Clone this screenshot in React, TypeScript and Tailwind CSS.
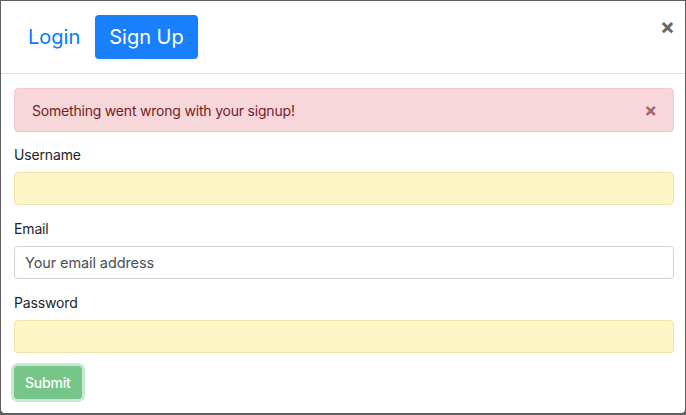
import React from 'react';

const font = { fontFamily: 'Inter, "Open Sans", sans-serif' };

function Field({ label, placeholder, warn }: { label: string; placeholder?: string; warn?: boolean }) {
  return (
    <div className="flex flex-col">
      <label className="text-[14px] tracking-[-0.15px] leading-[20px] text-[#212529] mb-[7px]">{label}</label>
      <input
        placeholder={placeholder}
        className={`h-[33px] w-full rounded-[4px] border px-[10px] text-[14.5px] tracking-[-0.1px] outline-none placeholder:text-[#495057] ${
          warn ? 'bg-[#fff6c8] border-[#f3e2a8]' : 'bg-white border-[#ced4da]'
        }`}
      />
    </div>
  );
}

export default function App() {
  return (
    <div className="w-[686px] h-[415px] bg-[#5f5f5f] pl-px pt-px" style={font}>
      <div className="w-[684px] h-[412px] bg-white rounded-b-[4px] flex flex-col">
        {/* header */}
        <div className="h-[73px] border-b border-[#dee2e6] flex items-center pl-[13px] pr-[10px]">
          <button className="px-[14px] h-[44px] text-[20px] text-[#007bff]">Login</button>
          <button className="ml-[1px] px-[14px] h-[44px] text-[20px] text-white bg-[#1a7ffb] rounded-[4px]">Sign Up</button>
          <button className="ml-auto -mt-[22px] text-[#666] text-[22px] font-bold leading-none">×</button>
        </div>

        <div className="pl-[13px] pr-[11px] pt-[14px] flex flex-col">
          {/* alert */}
          <div className="h-[44px] rounded-[4px] border border-[#f5c6cb] bg-[#f8d7da] flex items-center pl-[17px] pr-[16px] text-[#721c24] text-[14px] tracking-[-0.2px]">
            <span>Something went wrong with your signup!</span>
            <span className="ml-auto text-[#a8646d] text-[19px] font-bold leading-none">×</span>
          </div>

          <div className="mt-[13px] flex flex-col gap-[14px]">
            <Field label="Username" warn />
            <Field label="Email" placeholder="Your email address" />
            <Field label="Password" warn />
          </div>

          <div className="mt-[13px]">
            <button className="h-[33px] px-[11px] rounded-[4px] bg-[#76c68a] text-white text-[14px] tracking-[-0.2px] font-medium shadow-[0_0_0_3px_rgba(40,167,69,0.25)]">
              Submit
            </button>
          </div>
        </div>
      </div>
    </div>
  );
}
